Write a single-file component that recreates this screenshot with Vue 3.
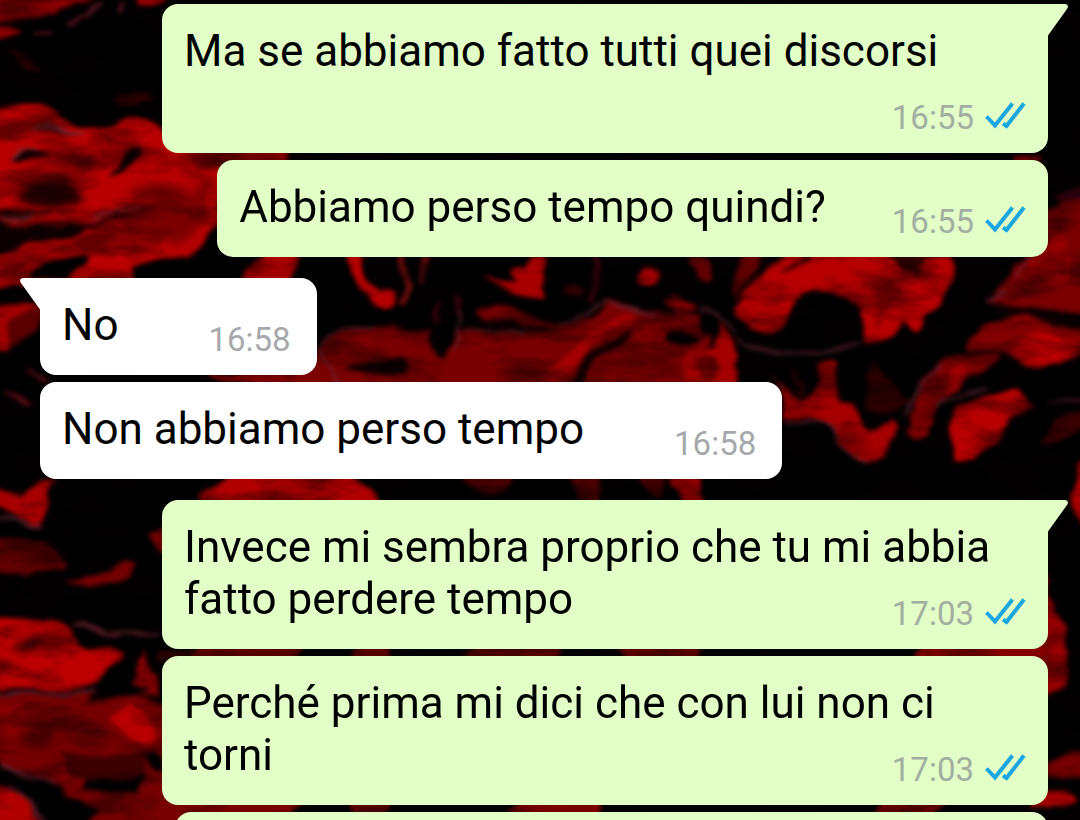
<script setup>
const messages = [
  { text: 'Ma se abbiamo fatto tutti quei discorsi', time: '16:55', out: true, tail: true },
  { text: 'Abbiamo perso tempo quindi?', time: '16:55', out: true },
  { text: 'No', time: '16:58', out: false, tail: true },
  { text: 'Non abbiamo perso tempo', time: '16:58', out: false },
  { text: 'Invece mi sembra proprio che tu mi abbia fatto perdere tempo', time: '17:03', out: true, tail: true },
  { text: 'Perché prima mi dici che con lui non ci torni', time: '17:03', out: true }
]
</script>

<template>
  <main class="chat">
    <svg class="wallpaper" viewBox="0 0 1080 820" preserveAspectRatio="xMidYMid slice" aria-hidden="true">
      <defs>
        <filter id="paint" filterUnits="userSpaceOnUse" x="-20" y="-20" width="1120" height="860" color-interpolation-filters="sRGB">
          <feTurbulence type="fractalNoise" baseFrequency="0.02 0.04" numOctaves="3" seed="4" result="noise" />
          <feDisplacementMap in="SourceGraphic" in2="noise" scale="16" xChannelSelector="R" yChannelSelector="G" />
          <feGaussianBlur stdDeviation="2" />
        </filter>
        <filter id="soft" x="-5%" y="-5%" width="110%" height="110%"><feGaussianBlur stdDeviation="1" /></filter>
        <filter id="softer" x="-5%" y="-5%" width="110%" height="110%"><feGaussianBlur stdDeviation="4" /></filter>
        <filter id="shade" filterUnits="userSpaceOnUse" x="0" y="0" width="1080" height="820" color-interpolation-filters="sRGB">
          <feTurbulence type="fractalNoise" baseFrequency="0.014 0.035" numOctaves="4" seed="11" />
          <feColorMatrix values="0 0 0 0 0  0 0 0 0 0  0 0 0 0 0  3 0 0 0 -1.25" />
        </filter>
      </defs>
      <rect width="1080" height="820" fill="#020001" />

      <g filter="url(#paint)">
      <!-- upper left -->
      <g filter="url(#soft)">
        <path fill="#8c0203" d="M-20 -20H108C98 2 88 6 72 8C52 11 30 22 -20 24Z" />
        <path fill="#9a0206" d="M-20 28C8 27 14 31 20 33C12 37 6 38 -20 38Z" />
        <path fill="#a80202" d="M134 -20H180L165 3C154 8 146 9 134 2Z" />
        <path fill="#b80202" d="M-20 109H33C52 111 66 122 82 129H112C124 122 132 118 146 120C156 121 160 125 165 135L180 150H225V190C222 220 206 246 190 257C178 265 150 262 132 265V285H-20Z" />
        <path fill="#2a0103" d="M4 50C18 54 30 66 42 74C26 72 10 64 4 50ZM112 102C126 92 144 90 154 98C144 106 126 108 112 102Z" />
      </g>
      <g filter="url(#softer)">
        <path fill="#240002" d="M14 196C24 180 42 172 62 178C78 182 86 196 76 206C54 212 30 208 14 196Z" />
        <path fill="#5c0002" d="M60 160C74 150 88 150 96 164C88 176 70 176 60 160ZM130 190C150 180 170 184 186 194C170 204 146 202 130 190Z" />
        <path fill="#7c0002" d="M120 214C150 200 190 200 214 176C212 214 200 240 176 248C156 240 132 242 120 214ZM176 160C194 166 206 170 212 184C196 184 180 176 176 160Z" />
      </g>
      <g filter="url(#soft)">
        <path fill="#0b0001" d="M12 162C14 152 20 148 32 149C40 149 46 152 48 155C36 160 24 160 12 162Z" />
        <path fill="#0b0001" d="M109 176C114 168 122 160 124 150C132 144 140 144 142 148C140 162 126 174 109 176Z" />
        <path fill="#100002" d="M29 129C40 121 60 121 84 138C72 136 54 126 29 129Z" />
        <path fill="#080001" d="M-20 212C20 210 60 214 90 216C110 214 126 208 146 209C132 218 112 224 84 228C92 232 60 236 30 242C16 246 8 260 -20 264V222C6 220 14 219 20 217L-20 214Z" />
        <path fill="#010001" d="M28 278C48 262 68 258 90 254C88 266 78 272 66 280ZM130 264C146 260 168 264 196 258L220 226V280H134Z" />
        <path fill="none" stroke="#b00505" stroke-width="6" d="M-20 216C30 222 60 220 96 220C112 216 126 210 142 210" />
        <path fill="none" stroke="#641828" stroke-width="3" d="M66 24C82 22 92 12 100 2M32 34C42 30 46 34 54 32M116 14C120 8 120 4 119 0" />
        <path fill="none" stroke="#84303c" stroke-width="2" d="M32 128C50 120 66 130 86 138M12 160C12 148 24 145 38 149M0 218H28M92 220C112 216 126 208 146 207" />
      </g>

      <!-- left middle -->
      <g filter="url(#soft)">
        <path fill="#b00202" d="M-20 262C10 262 14 250 30 248L24 276C14 286 10 288 -20 292Z" />
        <path fill="#a40202" d="M-20 307C10 301 26 304 42 306C34 320 24 340 8 350L-20 354Z" />
        <path fill="#5a0002" d="M10 320L40 306V330L8 350Z" />
        <path fill="none" stroke="#5c0a12" stroke-width="5" d="M28 370L48 380M4 390C14 392 20 404 31 409" />
        <path fill="#a80202" d="M-20 482C10 492 24 498 34 488C42 480 50 484 56 482C44 500 48 514 42 527C28 524 20 510 -20 506Z" />
        <path fill="none" stroke="#5a2834" stroke-width="3" d="M-20 524C8 518 16 514 24 522C34 528 38 524 42 526" />
        <path fill="#640003" d="M-20 541C20 538 50 540 58 552C68 560 72 566 66 568C50 566 36 570 24 576L-20 570Z" />
        <path fill="#740003" d="M70 582C88 580 104 572 114 568C124 560 134 562 136 564C128 574 122 582 112 584C98 584 88 588 70 582Z" />
        <path fill="#800002" d="M152 534L170 526V552C156 550 152 544 152 534Z" />
        <path fill="#b00202" d="M190 510C206 488 226 478 240 470H344C358 482 376 490 386 510Z" />
        <path fill="#4c0003" d="M458 470H514C512 488 504 496 494 495C480 490 466 488 458 470ZM566 470H600V510H584C576 494 572 486 566 470ZM624 470H664C670 488 664 500 656 496Z" />
        <path fill="#b00202" d="M668 470H702V510H686C682 492 676 486 668 470Z" />
      </g>

      <!-- lower left -->
      <g filter="url(#soft)">
        <path fill="#bc0202" d="M-20 617C24 614 54 618 66 626C76 634 78 644 92 646C104 648 116 648 126 655C112 664 106 674 92 682C76 690 50 684 -20 690Z" />
        <path fill="#8c0202" d="M130 690C140 674 142 660 144 650C150 650 152 670 158 696H134Z" />
        <path fill="#750002" d="M-20 694C30 692 60 696 84 690C110 706 150 690 180 710V840H80C60 806 50 780 -20 768Z" />
        <path fill="#b80202" d="M108 718C120 706 138 704 148 716C156 728 156 744 146 746C130 742 112 738 108 718Z" />
        <path fill="#3d0003" d="M160 652H210V650C196 656 180 658 160 660ZM60 750C80 756 110 758 148 752L144 780H70Z" />
        <path fill="#b00202" d="M-20 782C10 780 18 790 26 800C34 810 40 818 50 840H-20Z" />
      </g>
      <g filter="url(#softer)">
        <path fill="#1c0001" d="M14 650C24 638 36 634 44 638C38 650 26 656 14 650Z" />
        <path fill="#420001" d="M20 742C30 722 44 726 60 734C50 748 36 752 20 742Z" />
        <path fill="#9c0002" d="M0 710C16 706 26 712 34 716C24 730 10 734 0 728Z" />
      </g>
      <g filter="url(#soft)">
        <path fill="#060001" d="M90 696C108 688 120 690 136 684L152 690C140 700 112 700 90 700ZM104 676C114 664 124 660 140 656L134 676C124 684 114 680 104 682Z" />
        <path fill="#030001" d="M-20 764C20 764 40 774 54 786C68 798 84 800 98 806L80 840H60C48 808 32 792 20 784L-20 778ZM82 780C102 772 124 780 144 772L136 794C118 796 100 790 82 790ZM146 756C154 750 160 752 168 760V774C156 774 150 768 146 756Z" />
        <path fill="none" stroke="#702430" stroke-width="3" d="M-20 692C30 694 54 690 96 690M74 626C90 622 96 634 114 632C134 630 142 636 160 634M0 766C26 770 40 780 56 786M8 784C24 792 30 804 44 818" />
      </g>

      <!-- centre -->
      <g filter="url(#soft)">
        <path fill="#b60202" d="M238 290C244 266 258 260 268 250H300L288 290ZM346 250H362C364 272 370 286 378 290C386 288 394 292 396 300C396 310 388 314 382 310C366 302 354 286 346 250Z" />
        <path fill="none" stroke="#740810" stroke-width="6" d="M402 306C408 292 404 272 402 250M430 250C424 272 420 276 420 286" />
        <path fill="none" stroke="#34040e" stroke-width="7" d="M460 292V310M436 306V324M594 250C602 270 592 290 590 304" />
        <path fill="#780003" d="M308 390C306 356 328 330 360 327C390 324 408 326 428 328C424 340 430 352 444 356C456 340 450 334 466 330C500 330 530 340 560 332C590 326 600 318 620 310C640 306 664 308 700 310V390Z" />
        <path fill="#a80202" d="M480 276C494 280 506 284 516 282C504 270 512 258 520 268C528 260 536 256 544 256C544 276 544 292 546 300C528 306 506 292 480 276Z" />
        <path fill="#760006" d="M476 312C490 302 510 304 526 318C544 324 560 322 590 318C614 308 600 302 606 296C620 304 636 308 660 314L640 330H520C500 324 490 330 476 312Z" />
        <path fill="#a60202" d="M540 376C556 364 568 356 578 344C596 334 606 324 618 316C628 310 640 314 636 324C614 328 596 340 586 354C576 366 566 376 556 390Z" />
        <path fill="#0a0001" d="M344 368C360 360 378 366 400 360C410 362 414 370 400 374C380 376 360 374 344 370ZM572 384C580 360 592 346 610 344C626 338 630 330 634 332C630 346 618 348 604 354C592 362 586 372 582 390ZM478 322C496 316 512 322 524 328C508 334 490 330 478 322Z" />
        <path fill="#050001" d="M556 250C554 270 560 288 570 288L586 250Z" />
        <ellipse cx="648" cy="278" rx="9" ry="11" fill="#b80202" />
        <ellipse cx="574" cy="288" rx="10" ry="6" fill="#420004" />
        <path fill="none" stroke="#702a35" stroke-width="2" d="M322 352C320 336 344 328 376 326M322 346C326 370 330 376 340 384M466 330C492 330 502 334 524 336M560 320C580 320 584 312 604 304M602 298C618 306 636 310 654 312M454 350C460 336 458 322 462 308" />
        <path fill="#640003" d="M688 254H708C712 266 720 276 712 284C700 286 694 270 688 254Z" />
        <path fill="#9c0004" d="M664 302C680 298 692 302 698 306C686 310 670 308 664 302Z" />
        <path fill="#a40202" d="M682 390C682 358 686 348 700 342C710 338 716 326 722 322C726 338 738 346 738 358V390Z" />
        <path fill="#030001" d="M706 348C712 338 706 328 702 316C708 312 716 314 718 322C718 338 714 350 706 348ZM664 334C670 330 686 334 698 340C694 348 680 344 664 340Z" />
        <ellipse cx="710" cy="368" rx="12" ry="12" fill="#640002" />
      </g>

      <!-- right -->
      <g filter="url(#soft)">
        <path fill="#b60202" d="M736 310C740 292 756 276 774 262L790 250H900C914 268 930 258 952 258C958 270 950 290 940 300C924 320 922 328 914 330C908 322 906 316 902 322C896 338 880 350 868 344C868 320 858 298 836 294C812 290 796 294 790 310C782 332 768 332 756 328C744 326 736 320 736 310Z" />
        <path fill="#600003" d="M736 300C730 280 738 262 758 250H772C756 268 742 286 736 300Z" />
        <path fill="#8e0003" d="M850 270C868 272 884 276 900 288C898 304 888 318 878 330C880 300 866 280 850 270Z" />
        <path fill="#3a0003" d="M880 250H940L928 262C916 276 900 272 880 250Z" />
        <path fill="none" stroke="#170003" stroke-width="5" d="M782 268C792 262 802 260 810 258M892 258C900 268 912 270 924 274" />
        <path fill="#a60202" d="M766 364C772 380 796 396 800 402C808 400 816 390 816 372C818 364 826 356 832 362C832 380 834 398 848 404C864 408 864 426 874 430C880 426 890 424 896 420C900 424 896 438 890 446C880 460 864 466 854 460C842 454 836 436 830 428C820 418 806 420 786 418L776 384Z" />
        <path fill="#2c0003" d="M870 356C880 380 900 388 908 402C898 414 880 414 868 408ZM792 370C802 376 806 384 802 400C794 396 790 384 792 370Z" />
        <path fill="#7a0003" d="M906 432C916 400 914 384 930 370C948 356 976 352 998 354C1004 360 990 372 976 378C950 386 938 404 926 434C918 442 910 440 906 432Z" />
        <path fill="#ac0202" d="M948 378C964 360 982 356 992 356C1000 364 990 372 976 376C964 380 956 386 940 398Z" />
        <path fill="#b80202" d="M952 412C962 400 986 396 1004 390C1014 382 1020 388 1024 396L1034 406C1028 414 1016 414 1006 424C996 444 980 462 960 462C950 446 948 426 952 412Z" />
        <path fill="#7a0003" d="M1100 196C1060 204 1044 208 1040 222L1032 254L1016 262C1008 276 1006 290 984 302C996 308 1040 306 1100 318Z" />
        <path fill="#9a0202" d="M1022 262C1034 256 1050 244 1058 238C1072 246 1076 272 1070 282C1054 286 1040 276 1022 262Z" />
        <path fill="#840003" d="M968 336C986 322 1004 316 1026 318C1046 322 1062 332 1100 330V346C1070 362 1040 370 1018 364C1006 352 990 348 968 350Z" />
        <path fill="#b80202" d="M1004 350C1024 334 1044 330 1062 340C1074 344 1080 346 1068 356C1048 366 1024 368 1004 350Z" />
        <path fill="#090003" d="M996 308C1020 306 1046 318 1100 320V326C1050 328 1030 318 996 312Z" />
        <path fill="#3a0004" d="M1040 442C1048 422 1066 412 1100 412V432C1068 434 1056 446 1040 442Z" />
        <path fill="#b20204" d="M1100 446C1074 458 1070 484 1074 502C1076 520 1080 534 1100 540Z" />
        <path fill="none" stroke="#6a2a37" stroke-width="2" d="M734 334C748 352 772 360 800 354C826 350 840 342 866 346M786 422C806 426 824 418 832 432C842 446 848 462 870 462M906 416C910 394 924 378 942 364M936 410C950 394 968 390 990 386M1046 402C1060 406 1070 398 1100 400M984 302L1008 292M1014 278C1018 266 1030 258 1036 250M700 308C712 300 724 322 732 330" />
        <path fill="#2c0108" d="M1056 196C1066 194 1074 186 1100 186V196C1070 202 1062 206 1056 196Z" />
      </g>

      <!-- lower right and narrow gaps -->
      <g filter="url(#soft)">
        <path fill="#980203" d="M1036 560C1054 576 1048 600 1054 612C1066 620 1068 650 1066 680C1062 690 1052 698 1036 700Z" />
        <path fill="#780002" d="M1040 766C1054 746 1078 748 1100 752V772C1070 782 1056 782 1040 776Z" />
        <path fill="#b80202" d="M1030 796C1050 788 1070 790 1078 800C1076 808 1060 808 1030 806Z" />
        <path fill="#590003" d="M200 640H310L290 666H190ZM360 640H390V666H350ZM480 640H560V666H450ZM610 640H700V666H640Z" />
        <path fill="#860003" d="M920 640H1050V666H920Z" />
        <path fill="#790002" d="M160 798H310L290 820H160ZM350 798H390V820H360ZM520 798H600V820H500ZM880 798H948L930 820H870Z" />
        <path fill="#7d0002" d="M180 146H290V168H200ZM200 372H320V390H270ZM1010 154H1040V160H1014Z" />
      </g>
      </g>
      <rect width="1080" height="820" filter="url(#shade)" opacity="0.45" />
    </svg>

    <ol class="thread">
      <li
        v-for="(m, i) in messages"
        :key="i"
        class="bubble"
        :class="{ out: m.out, in: !m.out, tail: m.tail }"
      >
        <svg v-if="m.tail" class="tail-shape" viewBox="0 0 22 32" aria-hidden="true">
          <path d="M0 0H18.5C22 0 22.8 2.6 21 5L2 31.5H0Z" />
        </svg>
        <span class="text">{{ m.text }}</span>
        <span class="meta">
          <time>{{ m.time }}</time>
          <svg v-if="m.out" class="ticks" viewBox="0 0 42 28" role="img" aria-label="Letto">
            <path d="M2.5 15.5L11 24.5L28.5 2.5M19 22.5L22.5 25L40 2.5" />
          </svg>
        </span>
      </li>
      <li class="bubble out upcoming"></li>
    </ol>
  </main>
</template>

<style scoped>
.chat {
  position: relative;
  height: 100vh;
  overflow: hidden;
  background: #020001;
  font-family: Roboto, "Liberation Sans", sans-serif;
  color: #000;
}

.wallpaper {
  position: absolute;
  inset: 0;
  width: 100%;
  height: 100%;
}

.thread {
  position: relative;
  display: flex;
  flex-direction: column;
  gap: 7px;
  margin: 0;
  padding: 4px 32px 0 40px;
  list-style: none;
}

.bubble {
  position: relative;
  box-sizing: border-box;
  display: flow-root;
  max-width: calc(100% - 122px);
  padding: 21px 22px 24px 22px;
  border-radius: 16px;
  font-size: 44px;
  line-height: 52px;
}

.out {
  align-self: flex-end;
  background: #e1ffc7;
}

.in {
  align-self: flex-start;
  padding-right: 26px;
  background: #fff;
}

.tail:not(:first-child) {
  margin-top: 14px;
}

.out.tail {
  border-top-right-radius: 0;
}

.in.tail {
  border-top-left-radius: 0;
}

.tail-shape {
  position: absolute;
  top: 0;
  left: calc(100% - 2px);
  width: 22px;
  height: 32px;
  fill: #e1ffc7;
}

.in .tail-shape {
  left: auto;
  right: calc(100% - 2px);
  transform: scaleX(-1);
  fill: #fff;
}

.meta {
  float: right;
  display: flex;
  align-items: baseline;
  gap: 10px;
  height: 40px;
  margin: 21px 0 -9px 66px;
  color: #a3aea0;
  font-size: 33px;
  line-height: 40px;
}

.in .meta {
  margin-left: 90px;
  color: #a6a9ab;
}

.ticks {
  width: 42px;
  height: 28px;
  fill: none;
  stroke: #1ba6df;
  stroke-width: 4;
}

.upcoming {
  width: calc(100% - 135px);
  min-height: 97px;
}
</style>

<style>
body {
  margin: 0;
  background: #020001;
}
</style>
